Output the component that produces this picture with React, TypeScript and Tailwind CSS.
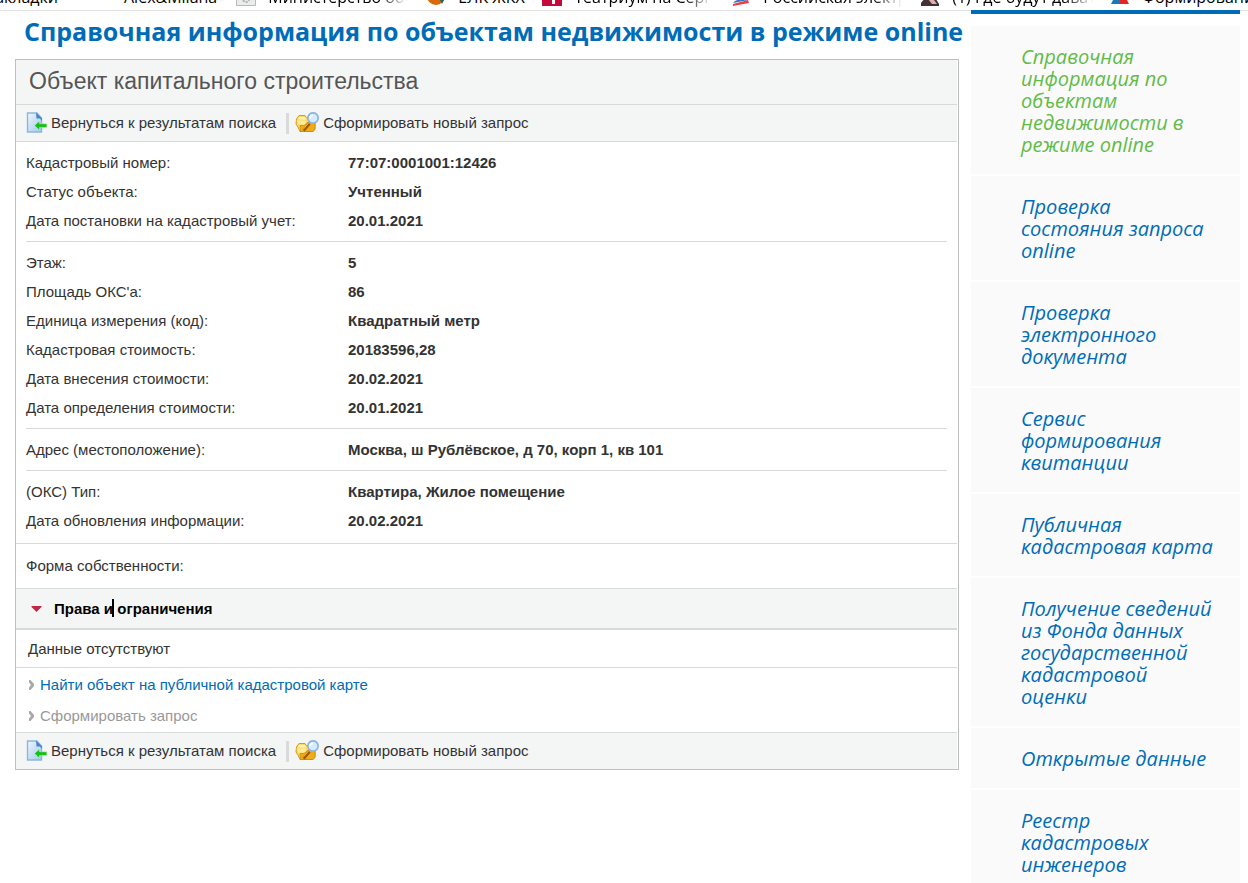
import type { ReactNode } from "react";

const sans = "font-['Liberation_Sans',Arial,sans-serif]";
const human = "font-['Open_Sans','Noto_Sans',sans-serif]";

function DocumentBackIcon() {
  return (
    <svg width="21" height="21" viewBox="0 0 21 21" className="mb-[2px]" aria-hidden="true">
      <defs>
        <linearGradient id="page" x1="0" y1="0" x2="1" y2="1">
          <stop offset="0" stopColor="#eef6fd" />
          <stop offset="1" stopColor="#a3c9ea" />
        </linearGradient>
      </defs>
      <path d="M1.500 1h9.500l4.500 5v14h-14z" fill="url(#page)" stroke="#8bb6e0" strokeWidth="1.400" />
      <path d="M10 .5 16 6.500v2.500l-2-2.500h-3.500z" fill="#4a83bf" />
      <path d="M8.500 13.500l5-4.500v2.800h7.300v3.600h-7.300v2.800z" fill="#14c014" stroke="#e9f7ee" strokeWidth=".4" />
    </svg>
  );
}

function FolderSearchIcon() {
  return (
    <svg width="25" height="21" viewBox="0 0 25 21" className="mb-[2px]" aria-hidden="true">
      <path d="M1.500 7 4 3.500h6L11.500 6H18l2 3v8l-2 2.500H5l-2-4.500-2-3z" fill="#fcd964" stroke="#d79a17" />
      <path d="M4 5h6l1.500 2.500H3z" fill="#fff3b5" />
      <path d="M1.500 8.500h9l1 4H3.500z" fill="#fdeb9a" />
      <path d="M5 13.500h4l3.500-3h7.500v6.500l-2 2.500H5.500z" fill="#f0ac14" stroke="#c78208" strokeWidth=".7" />
      <path d="M8.500 18.500 14.500 11.500" stroke="#9c5a0a" strokeWidth="3" />
      <path d="M8 17.500 13.500 11" stroke="#f6b93a" strokeWidth="1" />
      <circle cx="18" cy="6" r="5.200" fill="#d4ebfc" stroke="#8fb3e0" strokeWidth="1.700" />
      <path d="M15 6.500a3.200 3.200 0 0 1 3.200-3.200" stroke="#fff" strokeWidth="1.800" fill="none" />
    </svg>
  );
}

function Toolbar() {
  return (
    <div className="flex h-9 items-center bg-[#f4f6f6] pl-[10px] text-[15px] text-[#333]">
      <a href="#results" className="flex items-center gap-1">
        <DocumentBackIcon />
        Вернуться к результатам поиска
      </a>
      <span className="mr-[6px] ml-[10px] h-[21px] w-[3px] bg-[#d9dada]" />
      <a href="#new" className="flex items-center gap-[3px]">
        <FolderSearchIcon />
        Сформировать новый запрос
      </a>
    </div>
  );
}

function Rows({ items }: { items: [string, string][] }) {
  return (
    <dl className="py-[6px]">
      {items.map(([label, value]) => (
        <div key={label} className="flex h-[29px] items-center">
          <dt className="w-[322px] shrink-0">{label}</dt>
          <dd className="font-bold">{value}</dd>
        </div>
      ))}
    </dl>
  );
}

const groups: [string, string][][] = [
  [
    ["Кадастровый номер:", "77:07:0001001:12426"],
    ["Статус объекта:", "Учтенный"],
    ["Дата постановки на кадастровый учет:", "20.01.2021"],
  ],
  [
    ["Этаж:", "5"],
    ["Площадь ОКС'а:", "86"],
    ["Единица измерения (код):", "Квадратный метр"],
    ["Кадастровая стоимость:", "20183596,28"],
    ["Дата внесения стоимости:", "20.02.2021"],
    ["Дата определения стоимости:", "20.01.2021"],
  ],
  [["Адрес (местоположение):", "Москва, ш Рублёвское, д 70, корп 1, кв 101"]],
  [
    ["(ОКС) Тип:", "Квартира, Жилое помещение"],
    ["Дата обновления информации:", "20.02.2021"],
  ],
];

const services = [
  "Справочная информация по объектам недвижимости в режиме online",
  "Проверка состояния запроса online",
  "Проверка электронного документа",
  "Сервис формирования квитанции",
  "Публичная кадастровая карта",
  "Получение сведений из Фонда данных государственной кадастровой оценки",
  "Открытые данные",
  "Реестр кадастровых инженеров",
];

function Bookmark({
  icon,
  children,
  className,
  fade = true,
}: {
  icon: ReactNode;
  children: string;
  className: string;
  fade?: boolean;
}) {
  return (
    <a href="#bookmark" className={"flex shrink-0 items-end whitespace-nowrap " + className}>
      <svg width="20" height="20" viewBox="0 0 20 20" className="mr-3 mb-1 shrink-0" aria-hidden="true">
        {icon}
      </svg>
      <span
        className={
          fade
            ? "overflow-hidden leading-[26px] [mask-image:linear-gradient(to_right,black_calc(100%-28px),transparent)]"
            : "leading-[26px]"
        }
      >
        {children}
      </span>
    </a>
  );
}

function BookmarksBar() {
  return (
    <nav
      aria-label="Закладки"
      className="flex h-[11px] items-end overflow-hidden border-b border-[#e1e1e1] bg-white text-[16px] text-black"
    >
      <a href="#bookmark" className="flex w-[58px] shrink-0 justify-end leading-[26px] whitespace-nowrap">
        Закладки
      </a>
      <a href="#bookmark" className="mr-[19px] ml-[66px] shrink-0 leading-[26px] whitespace-nowrap">
        Alex&amp;Milana
      </a>
      <Bookmark
        className="w-[171px]"
        icon={
          <>
            <path d="M.5.5h19v19H.5z" fill="#ececec" stroke="#b9b9b9" />
            <circle cx="10" cy="13" r="3" fill="none" stroke="#a8b4b8" strokeWidth="2" strokeDasharray="2 1" />
          </>
        }
      >
        Министерство оборо
      </Bookmark>
      <Bookmark
        className="ml-[19px] w-[104px]"
        fade={false}
        icon={
          <>
            <circle cx="10" cy="10" r="9" fill="#d96a0b" />
            <path d="M12 10h8l-4 8z" fill="#176a70" />
          </>
        }
      >
        ЕЛК ЖКХ
      </Bookmark>
      <Bookmark
        className="ml-[12px] w-[170px]"
        icon={
          <>
            <path d="M0 0h20v20H0z" fill="#c40a3b" />
            <path d="M10 5h3v13h-3z" fill="#fff" />
          </>
        }
      >
        Театриум на Серпух
      </Bookmark>
      <Bookmark
        className="ml-[19px] w-[171px]"
        icon={
          <>
            <path d="M4 15 16 10l2 4L2 17z" fill="#3e77c9" />
            <path d="M2 18 17 14l1 3L2 20z" fill="#ed4141" />
          </>
        }
      >
        Российская электро
      </Bookmark>
      <Bookmark
        className="ml-[18px] w-[173px]"
        icon={
          <>
            <path d="M1 17 5 12l5 1 4-3 5 8v2H1z" fill="#433038" />
            <path d="M8 13l6 1 3 4h-5z" fill="#dfafa8" />
          </>
        }
      >
        (1) Где будут давать с
      </Bookmark>
      <Bookmark
        className="ml-[17px] w-[190px]"
        fade={false}
        icon={
          <>
            <path d="M1 18 5 10h5v8z" fill="#1878be" />
            <path d="M10 10h5l4 8h-9z" fill="#e52424" />
          </>
        }
      >
        Формирование запроса
      </Bookmark>
    </nav>
  );
}

export default function App() {
  return (
    <div className={"min-h-screen overflow-x-hidden bg-white " + sans}>
      <div className={human}>
        <BookmarksBar />
      </div>
      <div className="flex items-start">
        <main className="min-w-0 flex-1 pr-3 pl-[15px]">
          <h1
            className={
              "flex h-12 items-center pb-2 pl-[9px] text-[25px] leading-8 font-bold whitespace-nowrap text-[#006cb7] " +
              human
            }
          >
            Справочная информация по объектам недвижимости в режиме online
          </h1>
          <article className="border border-[#bebfbf] pr-px text-[15px] leading-[18px] text-[#333]">
            <h2 className="flex h-[44px] items-center bg-[#f4f6f6] pb-[2px] pl-[13px] text-[23px] text-[#555]">
              Объект капитального строительства
            </h2>
            <div className="border-y border-[#d7dada]">
              <Toolbar />
            </div>
            <div className="divide-y divide-[#d7dada] px-[10px] pb-[2px]">
              {groups.map((items) => (
                <Rows key={items[0][0]} items={items} />
              ))}
            </div>
            <p className="flex h-[45px] items-center border-t border-[#d7dada] pl-[10px]">Форма собственности:</p>
            <h3 className="border-t border-b-2 border-[#d7dada]">
              <button
                type="button"
                aria-expanded="true"
                className="flex h-[39px] w-full items-center gap-3 bg-[#f4f6f6] pl-[15px] font-bold text-black"
              >
                <svg width="11" height="6" viewBox="0 0 11 6" aria-hidden="true">
                  <path d="M.5 0h10v1L5.500 6 .5 1z" fill="#c12a46" />
                </svg>
                <span>
                  Права и
                  <span className="relative">
                    <span className="absolute -top-px -left-px h-[18px] w-[2px] bg-black" />{" "}
                  </span>
                  ограничения
                </span>
              </button>
            </h3>
            <p className="flex h-[37px] items-center pl-[12px]">Данные отсутствуют</p>
            <ul className="border-y border-[#d7dada] py-px pl-[12px]">
              {["Найти объект на публичной кадастровой карте", "Сформировать запрос"].map((text, i) => (
                <li key={text} className="flex h-[31px] items-center gap-[6px]">
                  <svg width="6" height="10" viewBox="0 0 6 10" aria-hidden="true">
                    <path d="M1 0h1.500L6 4v2L2.500 10H1V7.500L3 5 1 2.500z" fill="#a9a9a9" />
                  </svg>
                  <a href="#action" className={i === 0 ? "text-[#006cb7]" : "text-[#999]"}>
                    {text}
                  </a>
                </li>
              ))}
            </ul>
            <Toolbar />
          </article>
        </main>
        <aside className={"-mt-px mr-2 w-[269px] shrink-0 border-t-4 border-[#006cb7] pt-3 " + human}>
          <ul className="flex flex-col gap-[2px]">
            {services.map((text, i) => (
              <li
                key={text}
                className="bg-[#fafafa] pt-5 pr-6 pb-[18px] pl-[50px] text-[20px] leading-[22px] italic last:pb-[7px]"
              >
                <a href="#service" className={i === 0 ? "text-[#62bb46]" : "text-[#006cb7]"}>
                  {text}
                </a>
              </li>
            ))}
          </ul>
        </aside>
      </div>
    </div>
  );
}
